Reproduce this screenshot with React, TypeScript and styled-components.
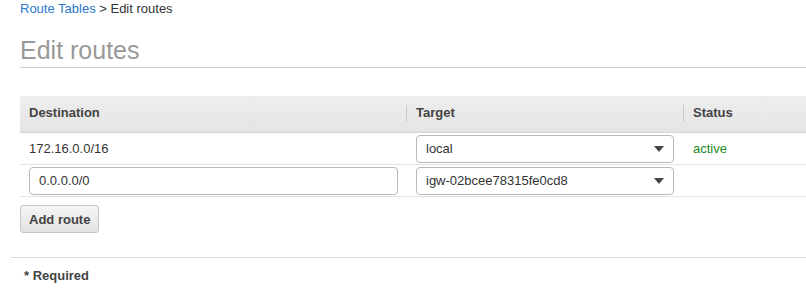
import React from 'react';
import styled, { createGlobalStyle } from 'styled-components';

const GlobalStyle = createGlobalStyle`
  body {
    margin: 0;
    background: #fff;
    font-family: "Liberation Sans", Arial, sans-serif;
    font-size: 13px;
    color: #444;
  }
`;

const Main = styled.div`
  padding-left: 20px;
`;

const Crumbs = styled.div`
  line-height: 18px;
  height: 18px;
  color: #333;

  a {
    color: #2b78cc;
    text-decoration: none;
  }
`;

const Title = styled.h1`
  margin: 17px 0 0 0;
  font-size: 25px;
  font-weight: 400;
  line-height: 30px;
  color: #999;
  padding-bottom: 2px;
  border-bottom: 1px solid #ccc;
`;

const Grid = styled.div`
  margin-top: 28px;
  display: grid;
  grid-template-columns: 386px 277px 1fr;
`;

const Head = styled.div<{ $sep?: boolean }>`
  position: relative;
  box-sizing: border-box;
  height: 37px;
  display: flex;
  align-items: center;
  padding: 0 0 3px ${p => (p.$sep ? '10px' : '9px')};
  background: linear-gradient(#eeeeee, #e4e4e4);
  border-bottom: 1px solid #d5d5d5;
  font-weight: 700;
  color: #444;

  &::before {
    content: '';
    display: ${p => (p.$sep ? 'block' : 'none')};
    position: absolute;
    left: 0;
    top: 9px;
    height: 17px;
    width: 1px;
    background: #c8c8c8;
  }
`;

const Cell = styled.div<{ $pad?: number }>`
  height: 31px;
  display: flex;
  align-items: center;
  padding-left: ${p => p.$pad ?? 9}px;
  border-bottom: 1px solid #e3e3e3;
  color: #333;
`;

const Field = styled.div<{ $w: number }>`
  box-sizing: border-box;
  width: ${p => p.$w}px;
  height: 28px;
  border: 1px solid #b9b9b9;
  border-radius: 4px;
  background: #fff;
  display: flex;
  align-items: center;
  padding: 0 8px 0 9px;
  color: #333;
`;

const Value = styled.span`
  flex: 1;
`;

const Caret = styled.span`
  width: 0;
  height: 0;
  border-left: 5px solid transparent;
  border-right: 5px solid transparent;
  border-top: 6px solid #444;
  margin-right: 1px;
`;

const Active = styled.span`
  color: #1d8a1d;
`;

const Button = styled.button`
  margin-top: 8px;
  height: 28px;
  padding: 0 8px;
  border: 1px solid #c6c6c6;
  border-radius: 3px;
  background: linear-gradient(#f6f6f6, #e2e2e2);
  font-family: inherit;
  font-size: 13px;
  font-weight: 700;
  color: #444;
`;

const Footer = styled.div`
  margin: 24px 0 0 11px;
  border-top: 1px solid #ddd;
  padding: 10px 0 0 13px;
  font-weight: 700;
  color: #444;
  line-height: 16px;
`;

const Select: React.FC<{ value: string }> = ({ value }) => (
  <Field $w={258}>
    <Value>{value}</Value>
    <Caret />
  </Field>
);

const App: React.FC = () => (
  <>
    <GlobalStyle />
    <Main>
      <Crumbs>
        <a href="#">Route Tables</a> &gt; Edit routes
      </Crumbs>
      <Title>Edit routes</Title>
      <Grid>
        <Head>Destination</Head>
        <Head $sep>Target</Head>
        <Head $sep>Status</Head>

        <Cell>172.16.0.0/16</Cell>
        <Cell $pad={10}><Select value="local" /></Cell>
        <Cell $pad={10}><Active>active</Active></Cell>

        <Cell>
          <Field $w={369}>0.0.0.0/0</Field>
        </Cell>
        <Cell $pad={10}><Select value="igw-02bcee78315fe0cd8" /></Cell>
        <Cell />
      </Grid>
      <Button>Add route</Button>
    </Main>
    <Footer>* Required</Footer>
  </>
);

export default App;
